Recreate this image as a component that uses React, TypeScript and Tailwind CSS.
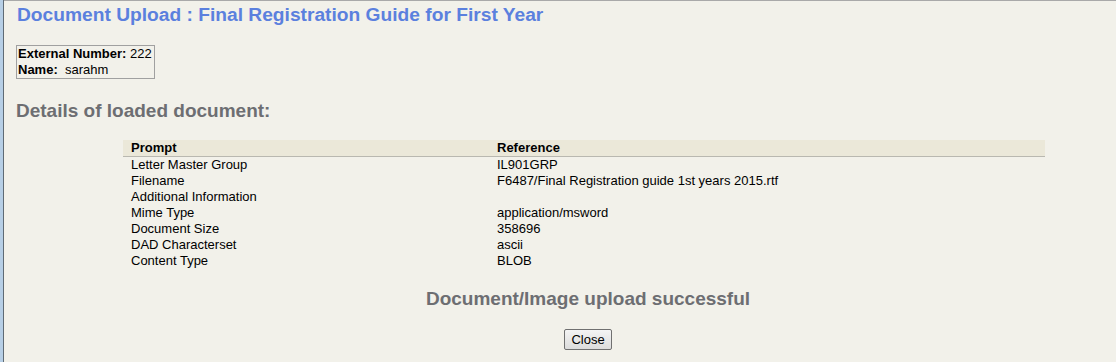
import React from "react";

const rows: [string, string][] = [
  ["Letter Master Group", "IL901GRP"],
  ["Filename", "F6487/Final Registration guide 1st years 2015.rtf"],
  ["Additional Information", ""],
  ["Mime Type", "application/msword"],
  ["Document Size", "358696"],
  ["DAD Characterset", "ascii"],
  ["Content Type", "BLOB"],
];

export default function App() {
  return (
    <div
      className="w-[1116px] h-[362px] overflow-hidden flex bg-[#f2f1ea] text-black"
      style={{ fontFamily: '"Liberation Sans", Arial, sans-serif' }}
    >
      <div className="w-[3px] h-full bg-[#b7cfe6]" />
      <div className="w-[1px] h-full bg-[#5f6b75]" />
      <div className="flex-1 flex flex-col border-t border-[#a9a9a9]">
        <div className="pl-[13px] pt-[3px] text-[19.2px] leading-[22px] font-bold text-[#5b80de]">
          Document Upload : Final Registration Guide for First Year
        </div>
        <div className="pl-[12px] pt-[19px]">
          <div className="inline-block border border-[#a0a0a0] pl-[1px] pr-[2px] text-[13px] leading-[16px]">
            <div>
              <span className="font-bold">External Number:</span> 222
            </div>
            <div>
              <span className="font-bold">Name:</span>&nbsp; sarahm
            </div>
          </div>
        </div>
        <div className="pl-[12px] pt-[19px] text-[19px] leading-[22px] font-bold text-[#6d6e72]">
          Details of loaded document:
        </div>
        <div className="pl-[119px] pt-[18px]">
          <div className="w-[922px] text-[13px] leading-[16px]">
            <div className="flex bg-[#ebe8d9] border-b border-[#b9b8b0] font-bold">
              <div className="w-[374px] pl-[8px]">Prompt</div>
              <div>Reference</div>
            </div>
            {rows.map(([p, r]) => (
              <div key={p} className="flex h-[16px]">
                <div className="w-[374px] pl-[8px]">{p}</div>
                <div>{r}</div>
              </div>
            ))}
          </div>
          <div className="w-[930px]">
            <div className="pt-[19px] text-center text-[19px] leading-[22px] font-bold text-[#6d6e72]">
              Document/Image upload successful
            </div>
            <div className="pt-[19px] flex justify-center">
              <button className="h-[21px] px-[6px] text-[13px] leading-[16px] border border-[#707070] rounded-[2px] bg-gradient-to-b from-[#f4f4f4] to-[#dcdcdc]">
                Close
              </button>
            </div>
          </div>
        </div>
      </div>
    </div>
  );
}
